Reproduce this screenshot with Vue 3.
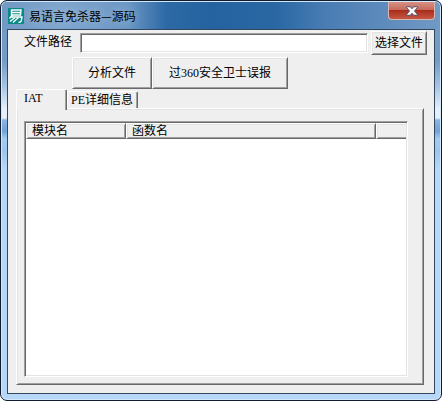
<template>
  <div class="window">
    <header class="titlebar">
      <svg class="logo" viewBox="0 0 16 16" width="16" height="16" aria-hidden="true">
        <rect width="16" height="16" rx="1" fill="#068a86" />
        <g fill="none" stroke="#fff" stroke-width="1.4">
          <path d="M3.500 2h9.500l-.5 5h-9zM3.500 4.500h9" />
          <path d="M4.500 7L1.500 10.500M3.500 9h10.500l-.8 4q-.4 1.500-2.700 1.200" />
          <path d="M7 9.500L2 13.500M10.500 9.500L5 14.500" />
        </g>
      </svg>
      <h1 class="title">易语言免杀器—源码</h1>
      <button class="close" type="button" aria-label="关闭">
        <svg viewBox="0 0 12 10" width="12" height="10" aria-hidden="true">
          <path
            d="M.7.7h3.600L6 2.700 7.700.7h3.600v1L8.500 5l2.800 3.300v1H7.700L6 7.300 4.300 9.300H.7v-1L3.500 5 .7 1.700z"
            fill="#f5f5f5"
            stroke="#56526a"
            stroke-width="1"
          />
        </svg>
      </button>
    </header>

    <main class="client">
      <div class="path-row">
        <label for="path">文件路径</label>
        <input id="path" v-model="path" type="text" />
        <button class="btn" type="button">选择文件</button>
      </div>

      <div class="actions">
        <button class="btn analyse" type="button">分析文件</button>
        <button class="btn bypass" type="button">过360安全卫士误报</button>
      </div>

      <div class="tabs" role="tablist">
        <button
          v-for="tab in tabs"
          :key="tab"
          class="tab"
          :class="{ active: tab === current }"
          type="button"
          role="tab"
          :aria-selected="tab === current"
          @click="current = tab"
        >
          {{ tab }}
        </button>
      </div>

      <section class="panel" role="tabpanel">
        <div class="list">
          <table>
            <thead>
              <tr>
                <th class="col-module">模块名</th>
                <th class="col-func">函数名</th>
                <th class="col-rest"></th>
              </tr>
            </thead>
          </table>
        </div>
      </section>
    </main>
  </div>
</template>

<script setup>
import { ref } from 'vue'

const path = ref('')
const tabs = ['IAT', 'PE详细信息']
const current = ref('IAT')
</script>

<style>
body {
  background: #fff;
}
</style>

<style scoped>
* {
  box-sizing: border-box;
}

.window {
  display: flex;
  flex-direction: column;
  min-height: 100vh;
  padding: 0 6px 6px;
  border: 1px solid #101c30;
  border-radius: 7px;
  box-shadow: inset 0 0 0 1px #d5e8fa;
  background: linear-gradient(
    #7199c4 0,
    #749cc6 60px,
    #a5c3e2 85px,
    #e6f0fa 108px,
    #e6f0fa 117px,
    #8ab6e4 119px,
    #6fa3d8 130px,
    #a5cbf2 138px,
    #9cc4ec 150px,
    #b7d7f8 168px,
    #b7d7f8 100%
  );
  font-family: "Liberation Serif", "Noto Sans CJK SC", serif;
  font-size: 12px;
  color: #000;
}

button,
input {
  font: inherit;
  color: inherit;
}

.titlebar {
  display: flex;
  align-items: center;
  gap: 5px;
  height: 27px;
  margin: 1px -5px 0;
  padding: 0 5px 0 6px;
  border-radius: 5px 5px 0 0;
  background: linear-gradient(90deg, #7199c4 0, #7fa5cd 60px, #6c97c4 125px, #2c69a5 165px, #2463a0 210px, #2a68a4 275px, #4a7db4 325px, #7199c4 100%);
}

.logo {
  flex: none;
}

.title {
  flex: 1;
  margin: 0;
  font-family: "Noto Sans CJK SC", sans-serif;
  font-size: 12px;
  font-weight: 400;
  line-height: 16px;
  text-shadow: 0 0 8px #a9c5e1;
}

.close {
  display: flex;
  align-self: flex-start;
  align-items: center;
  justify-content: center;
  width: 47px;
  height: 18px;
  padding: 0;
  border: 1px solid #d9b6b4;
  border-top: 0;
  border-radius: 0 0 4px 4px;
  background: linear-gradient(#d69184 0, #c66b5c 45%, #a92c1c 50%, #c55742 100%);
}

.client {
  flex: 1;
  display: flex;
  flex-direction: column;
  padding: 1px 7px 8px 8px;
  border: 1px solid #33485e;
  background: #efefef;
}

.path-row {
  display: flex;
  align-items: center;
  padding-left: 8px;
}

.path-row label {
  width: 56px;
  line-height: 16px;
  padding-bottom: 2px;
}

.path-row input {
  flex: 1;
  min-width: 0;
  height: 20px;
  margin-right: 3px;
  padding: 0 2px;
  border: 1px solid;
  border-color: #a0a0a0 #fff #fff #a0a0a0;
  border-radius: 0;
  outline: 0;
  background: #fff;
  box-shadow: inset 1px 1px #696969, inset -1px -1px #e3e3e3;
}

.btn {
  padding: 0;
  border: 1px solid;
  border-color: #fff #696969 #696969 #fff;
  border-radius: 0;
  background: #efefef;
  box-shadow: inset 1px 1px #e3e3e3, inset -1px -1px #a0a0a0;
  line-height: 16px;
}

.path-row .btn {
  width: 56px;
  height: 24px;
}

.actions {
  display: flex;
  margin: 2px 0 0 56px;
}

.actions .btn {
  height: 32px;
}

.analyse {
  width: 80px;
}

.bypass {
  width: 136px;
}

.tabs {
  display: flex;
  align-items: flex-end;
  height: 19px;
}

.tab {
  width: 71px;
  height: 17px;
  padding: 0 3px;
  border: 1px solid;
  border-color: #fff #696969 transparent #fff;
  border-bottom: 0;
  border-radius: 2px 2px 0 0;
  background: #efefef;
  box-shadow: inset -1px 0 #a0a0a0;
  line-height: 16px;
  text-align: left;
  white-space: nowrap;
}

.tab.active {
  z-index: 1;
  width: 51px;
  height: 21px;
  margin-bottom: -2px;
  padding: 0 7px 4px;
}

.panel {
  flex: 1;
  display: flex;
  margin-right: 3px;
  padding: 12px 15px 7px 7px;
  border: 1px solid;
  border-color: #fff #696969 #696969 #fff;
  box-shadow: inset 1px 1px #e3e3e3, inset -1px -1px #a0a0a0;
}

.list {
  flex: 1;
  padding: 1px;
  border: 1px solid;
  border-color: #a0a0a0 #fff #fff #a0a0a0;
  background: #fff;
  box-shadow: inset 1px 1px #696969, inset -1px -1px #e3e3e3;
}

table {
  width: 100%;
  table-layout: fixed;
  border-collapse: separate;
  border-spacing: 0;
}

th {
  height: 16px;
  padding: 0 5px;
  border: 1px solid;
  border-color: #fff #696969 #696969 #fff;
  background: #efefef;
  box-shadow: inset 1px 1px #e3e3e3, inset -1px -1px #a0a0a0;
  font-weight: 400;
  line-height: 14px;
  text-align: left;
}

.col-module {
  width: 100px;
}

.col-func {
  width: 250px;
}

.col-rest {
  border-right: 0;
  box-shadow: inset 1px 1px #e3e3e3, inset 0 -1px #a0a0a0;
}
</style>
